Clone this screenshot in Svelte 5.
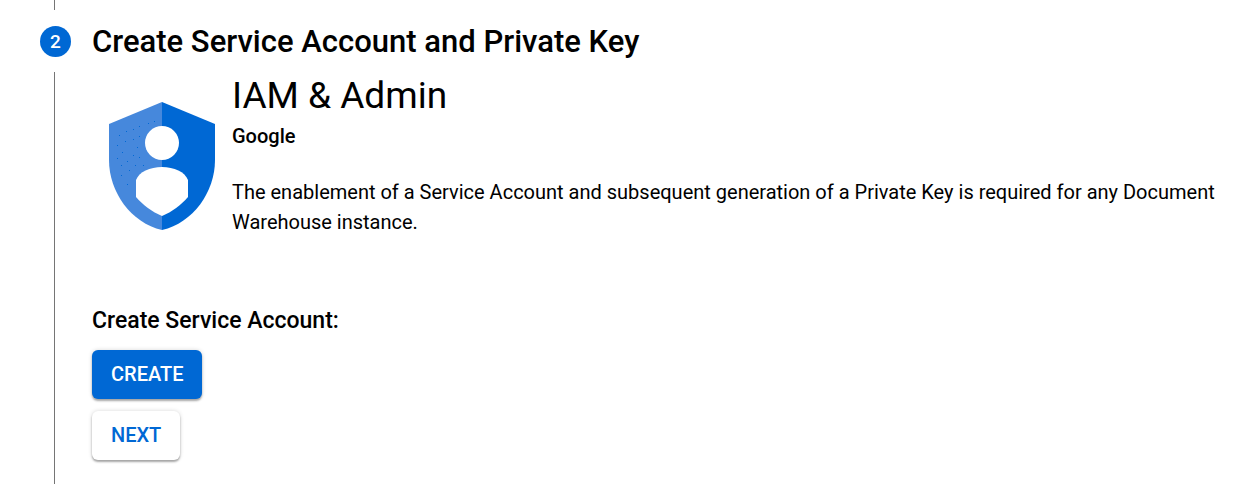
<script>
  const dots = [
    [10, 33], [17, 29], [24, 27], [30, 24], [39, 21], [45, 19],
    [30, 34], [24, 37], [16, 39], [8, 43], [28, 45], [13, 50],
    [24, 53], [30, 55], [8, 56], [18, 59], [12, 63], [26, 63],
    [34, 63], [20, 68], [12, 73], [18, 82],
  ];
</script>

<section class="step">
  <div class="rail">
    <span class="line top"></span>
    <span class="badge">2</span>
    <span class="line rest"></span>
  </div>
  <div class="content">
    <h1>Create Service Account and Private Key</h1>
    <article>
      <svg class="shield" viewBox="0 0 106 128" aria-hidden="true">
        <path fill="#4688dc" d="M53 0 0 22v36c0 32 22 63 53 70Z" />
        <path fill="#0068d4" d="M53 0l53 22v36c0 32-22 63-53 70Z" />
        {#each dots as [x, y]}
          <rect {x} {y} width="1" height="1" fill="#0068d4" />
        {/each}
        <circle cx="53" cy="41" r="17" fill="#fff" />
        <path fill="#fff" d="M27 78c3-8 14-13 26-13s23 5 26 13v17c-7 8-16 15-26 19-10-4-19-11-26-19Z" />
      </svg>
      <div class="about">
        <h2>IAM &amp; Admin</h2>
        <p class="vendor">Google</p>
        <p class="text">The enablement of a Service Account and subsequent generation of a Private Key is required for any Document Warehouse instance.</p>
      </div>
    </article>
    <h3>Create Service Account:</h3>
    <div class="actions">
      <button class="primary" type="button">CREATE</button>
      <button type="button">NEXT</button>
    </div>
  </div>
</section>

<style>
  :global(body) { margin: 0; background: #fff; }
  h1, h2, h3, p { margin: 0; }
  .step {
    display: flex;
    gap: 21px;
    padding: 0 16px 0 40px;
    min-height: 100vh;
    box-sizing: border-box;
    font-family: Roboto, sans-serif;
    color: #000;
  }
  .rail { display: flex; flex-direction: column; width: 31px; flex: none; }
  .line { width: 1px; margin-left: 14px; background: #757575; }
  .top { height: 10px; }
  .rest { flex: 1; }
  .badge {
    height: 31px;
    margin: 16px 0 15px;
    border-radius: 50%;
    background: #0068d4;
    color: #fff;
    font-size: 19px;
    font-weight: 500;
    line-height: 31px;
    text-align: center;
  }
  .content { flex: 1; min-width: 0; padding-top: 22px; }
  h1 { font-size: 31px; line-height: 40px; font-weight: 500; }
  article { display: flex; gap: 17px; padding: 12px 0 0 17px; }
  .shield { width: 106px; height: 128px; flex: none; margin-top: 28px; }
  h2 { font-size: 37px; line-height: 44px; font-weight: 400; }
  .vendor { margin-top: 6px; font-size: 20px; line-height: 24px; font-weight: 500; }
  .text { margin-top: 29px; font-size: 20px; line-height: 30px; }
  h3 { margin-top: 69px; font-size: 23px; line-height: 30px; font-weight: 500; }
  .actions { display: flex; flex-direction: column; align-items: flex-start; gap: 12px; margin-top: 14px; padding-bottom: 23px; }
  button {
    height: 49px;
    padding: 0 19px;
    border: 0;
    border-radius: 6px;
    background: #fff;
    color: #0068d4;
    font: 500 20px/49px Roboto, sans-serif;
    box-shadow: 0 2px 2px rgba(0, 0, 0, 0.3), 0 0 4px rgba(0, 0, 0, 0.16);
  }
  .primary { background: #0068d4; color: #fff; }
</style>
